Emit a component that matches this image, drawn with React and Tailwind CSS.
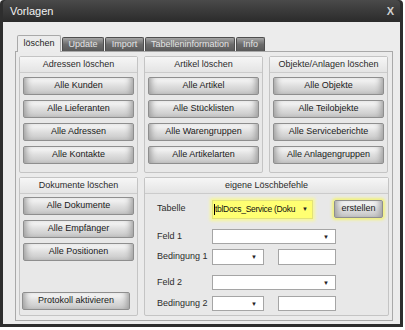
import React from 'react';

function Group({ title, className = '', children }) {
  return (
    <div className={'flex flex-col rounded-[2px] border border-[#c4c4c4] bg-[#e8e8e8] ' + className}>
      <div className="h-[16px] flex items-center justify-center border-b border-[#cbcbcb] bg-gradient-to-b from-[#f6f6f6] to-[#e4e4e4] text-[#2a2a2a]">
        {title}
      </div>
      {children}
    </div>
  );
}

function Btn({ children, className = '' }) {
  return (
    <div
      className={
        'h-[18px] flex items-center justify-center rounded-[2px] border border-[#8e8e8e] bg-gradient-to-b from-[#fbfbfb] via-[#dedede] to-[#c6c6c6] shadow-[inset_6px_0_6px_-4px_#9a9a9a,inset_-6px_0_6px_-4px_#9a9a9a] text-[#1a1a1a] ' +
        className
      }
    >
      {children}
    </div>
  );
}

function Combo({ className = '' }) {
  return (
    <div className={'flex items-center justify-end border border-[#a5a5a5] bg-white pr-[6px] ' + className}>
      <span className="text-[6px] leading-none text-[#222]">▼</span>
    </div>
  );
}

function Label({ children }) {
  return <div className="w-[55px] shrink-0 text-[#2c2c2c]">{children}</div>;
}

const tabs = [
  { name: 'Update', w: 'w-[42px]' },
  { name: 'Import', w: 'w-[39px]' },
  { name: 'Tabelleninformation', w: 'w-[90px]' },
  { name: 'Info', w: 'w-[29px]' },
];

export default function App() {
  return (
    <div className="w-[405px] h-[330px] bg-white font-['Liberation_Sans',Arial,sans-serif] text-[9px] text-[#1e1e1e]">
      <div className="w-[403px] h-[327px] flex flex-col rounded-t-[4px] bg-[#2e2e2e] px-[3px] pb-[3px]">
        {/* title bar */}
        <div className="h-[22px] shrink-0 flex items-center justify-between pl-[7px] pr-[6px] rounded-t-[4px] bg-gradient-to-b from-[#4a4a4a] to-[#2b2b2b] text-[11px] text-[#f2f2f2]">
          <span>Vorlagen</span>
          <span className="font-bold text-[11px] text-[#d0d0d0]">X</span>
        </div>

        <div className="flex-1 flex flex-col bg-[#ececec] pl-[12px] pr-[7px] pt-[12px] pb-[3px]">
          {/* tabs */}
          <div className="flex items-end h-[17px] pl-[2px]">
            <div className="w-[44px] h-[17px] -mb-px z-10 flex items-center justify-center rounded-t-[2px] border border-b-0 border-[#a9a9a9] bg-[#ececec] text-[#1e1e1e]">
              löschen
            </div>
            {tabs.map((t) => (
              <div
                key={t.name}
                className={t.w + ' h-[14px] ml-px flex items-center justify-center rounded-t-[2px] border border-b-0 border-[#4e4e4e] bg-gradient-to-b from-[#a5a5a5] via-[#6c6c6c] to-[#5a5a5a] text-[#e4e4e4]'}
              >
                {t.name}
              </div>
            ))}
          </div>

          {/* tab panel */}
          <div className="flex-1 flex flex-col gap-[4px] border border-[#a9a9a9] bg-[#ebebeb] px-[3px] pt-[4px] pb-[4px]">
            <div className="flex gap-[6px] h-[117px]">
              <Group title="Adressen löschen" className="w-[119px]">
                <div className="flex flex-col gap-[5px] px-[3px] pt-[4px]">
                  <Btn>Alle Kunden</Btn>
                  <Btn>Alle Lieferanten</Btn>
                  <Btn>Alle Adressen</Btn>
                  <Btn>Alle Kontakte</Btn>
                </div>
              </Group>
              <Group title="Artikel löschen" className="w-[119px]">
                <div className="flex flex-col gap-[5px] px-[3px] pt-[4px]">
                  <Btn>Alle Artikel</Btn>
                  <Btn>Alle Stücklisten</Btn>
                  <Btn>Alle Warengruppen</Btn>
                  <Btn>Alle Artikelarten</Btn>
                </div>
              </Group>
              <Group title="Objekte/Anlagen löschen" className="w-[119px]">
                <div className="flex flex-col gap-[5px] px-[3px] pt-[4px]">
                  <Btn>Alle Objekte</Btn>
                  <Btn>Alle Teilobjekte</Btn>
                  <Btn>Alle Serviceberichte</Btn>
                  <Btn>Alle Anlagengruppen</Btn>
                </div>
              </Group>
            </div>

            <div className="flex gap-[6px] flex-1">
              <Group title="Dokumente löschen" className="w-[119px]">
                <div className="flex flex-col gap-[5px] px-[3px] pt-[3px]">
                  <Btn>Alle Dokumente</Btn>
                  <Btn>Alle Empfänger</Btn>
                  <Btn>Alle Positionen</Btn>
                </div>
                <div className="mt-auto mb-[5px] px-[2px]">
                  <Btn className="w-[108px]">Protokoll aktivieren</Btn>
                </div>
              </Group>

              <Group title="eigene Löschbefehle" className="flex-1">
                <div className="flex flex-col pl-[12px] pt-[5px]">
                  <div className="flex items-center h-[20px]">
                    <Label>Tabelle</Label>
                    <div className="w-[101px] h-[19px] flex items-center border border-[#e2e27a] bg-[#ffff72] shadow-[0_0_3px_2px_#f7f79a] pl-[1px] pr-[4px]">
                      <span className="w-px h-[11px] shrink-0 bg-black" />
                      <span className="flex-1 overflow-hidden whitespace-nowrap text-[8.5px] tracking-[-0.3px] text-[#111]">tblDocs_Service (Doku</span>
                      <span className="text-[6px] leading-none ml-[2px] text-[#222]">▼</span>
                    </div>
                    <div className="ml-[21px] w-[49px] rounded-[2px] shadow-[0_0_3px_2px_#f2f27c]">
                      <Btn className="w-[49px] bg-gradient-to-b from-[#ececd8] via-[#d6d6bc] to-[#c0c0a4]">erstellen</Btn>
                    </div>
                  </div>
                  <div className="flex items-center h-[15px] mt-[10px]">
                    <Label>Feld 1</Label>
                    <Combo className="w-[124px] h-[15px]" />
                  </div>
                  <div className="flex items-center h-[16px] mt-[5px]">
                    <Label>Bedingung 1</Label>
                    <Combo className="w-[52px] h-[16px]" />
                    <div className="ml-[14px] w-[58px] h-[16px] border border-[#a5a5a5] bg-white" />
                  </div>
                  <div className="flex items-center h-[15px] mt-[10px]">
                    <Label>Feld 2</Label>
                    <Combo className="w-[124px] h-[15px]" />
                  </div>
                  <div className="flex items-center h-[15px] mt-[6px]">
                    <Label>Bedingung 2</Label>
                    <Combo className="w-[52px] h-[15px]" />
                    <div className="ml-[14px] w-[58px] h-[15px] border border-[#a5a5a5] bg-white" />
                  </div>
                </div>
              </Group>
            </div>
          </div>
        </div>
      </div>
    </div>
  );
}
